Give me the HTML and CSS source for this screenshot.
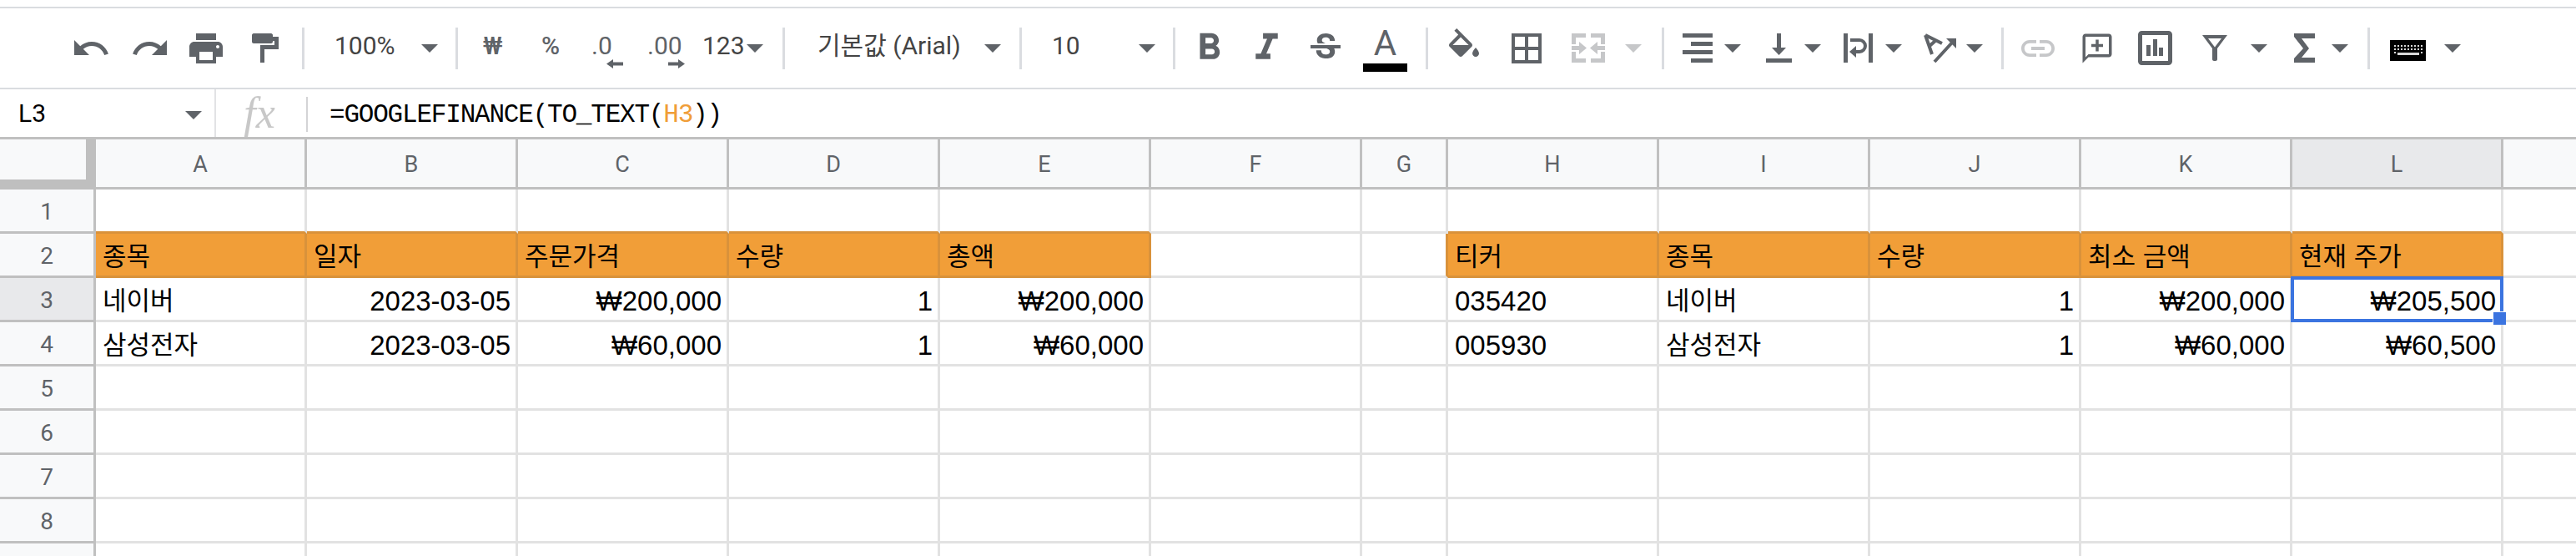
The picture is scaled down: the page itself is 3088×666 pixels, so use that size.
FILE: index.html
```html
<!DOCTYPE html>
<html lang="ko">
<head>
<meta charset="utf-8">
<title>Sheet</title>
<link rel="stylesheet" href="styles.css">
</head>
<body>
<div class="toolbar">
  <svg class="ic" viewBox="0 0 24 24"><path d="M12.5 8c-2.65 0-5.05.99-6.9 2.6L2 7v9h9l-3.62-3.62c1.39-1.16 3.16-1.88 5.12-1.88 3.54 0 6.55 2.31 7.6 5.5l2.37-.78C21.08 11.03 17.15 8 12.5 8z"/></svg>
  <svg class="ic" viewBox="0 0 24 24"><path d="M18.4 10.6C16.55 8.99 14.15 8 11.5 8c-4.65 0-8.58 3.03-9.96 7.22L3.9 16c1.05-3.19 4.05-5.5 7.6-5.5 1.95 0 3.73.72 5.12 1.88L13 16h9V7l-3.6 3.6z"/></svg>
  <svg class="ic" viewBox="0 0 24 24"><path d="M19 8H5c-1.66 0-3 1.34-3 3v6h4v4h12v-4h4v-6c0-1.66-1.34-3-3-3zm-3 11H8v-5h8v5zm3-7c-.55 0-1-.45-1-1s.45-1 1-1 1 .45 1 1-.45 1-1 1zm-1-9H6v4h12V3z"/></svg>
  <svg class="paint" viewBox="0 0 33 35"><path d="M2 0h21c1 0 2 1 2 2v2h7v15H15v16h-5V14h17V9h-2v1c0 1-1 2-2 2H2c-1 0-2-1-2-2V2c0-1 1-2 2-2z"/></svg>
  <i class="sep"></i>
  <span class="t">100%</span>
  <i class="dd"></i>
  <i class="sep"></i>
  <span class="t g b">₩</span>
  <span class="t g b">%</span>
  <span class="t g dec">.0<svg class="da" viewBox="0 0 20 11"><path d="M20 3.5H8V0L0 5.5 8 11V7.5h12z"/></svg></span>
  <span class="t g dec">.00<svg class="da da2" viewBox="0 0 20 11"><path d="M0 3.5h12V0l8 5.5-8 5.5V7.5H0z"/></svg></span>
  <span class="t">123</span>
  <i class="dd"></i>
  <i class="sep"></i>
  <span class="t">기본값 (Arial)</span>
  <i class="dd"></i>
  <i class="sep"></i>
  <span class="t">10</span>
  <i class="dd"></i>
  <i class="sep"></i>
  <svg class="ic lg" viewBox="0 0 24 24"><path d="M15.6 10.79c.97-.67 1.65-1.77 1.65-2.79 0-2.26-1.75-4-4-4H7v14h7.04c2.09 0 3.71-1.7 3.71-3.79 0-1.52-.86-2.82-2.15-3.42zM10 6.5h3c.83 0 1.5.67 1.5 1.5s-.67 1.5-1.5 1.5h-3v-3zm3.5 9H10v-3h3.5c.83 0 1.5.67 1.5 1.5s-.67 1.5-1.5 1.5z"/></svg>
  <svg class="ic lg" viewBox="0 0 24 24"><path d="M10 4v3h2.21l-3.42 8H6v3h8v-3h-2.21l3.42-8H18V4z"/></svg>
  <svg class="ic" viewBox="0 0 24 24"><path d="M7.24 8.75c-.26-.48-.39-1.03-.39-1.67 0-.61.13-1.16.4-1.67.26-.5.63-.93 1.11-1.29.48-.35 1.05-.63 1.7-.83.66-.19 1.39-.29 2.18-.29.81 0 1.54.11 2.21.34.66.22 1.23.54 1.69.94.47.4.83.88 1.08 1.43.25.55.38 1.15.38 1.81h-3.01c0-.31-.05-.59-.15-.85-.09-.27-.24-.49-.44-.68-.2-.19-.45-.33-.75-.44-.3-.1-.66-.16-1.06-.16-.39 0-.74.04-1.03.13-.29.09-.53.21-.72.36-.19.16-.34.34-.44.55-.1.21-.15.43-.15.66 0 .48.25.88.74 1.21.38.25.77.48 1.41.7H7.39c-.05-.08-.11-.17-.15-.25zM21 12v-2H3v2h9.62c.18.07.4.14.55.2.37.17.66.34.87.51.21.17.35.36.43.57.07.2.11.43.11.69 0 .23-.05.45-.14.66-.09.2-.23.38-.42.53-.19.15-.42.26-.71.35-.29.08-.63.13-1.01.13-.43 0-.83-.04-1.18-.13s-.66-.23-.91-.42c-.25-.19-.45-.44-.59-.75-.14-.31-.25-.76-.25-1.21H6.4c0 .55.08 1.13.24 1.58.16.45.37.85.65 1.21.28.35.6.66.98.92.37.26.78.48 1.22.65.44.17.9.3 1.38.39.48.08.96.13 1.44.13.8 0 1.53-.09 2.18-.28s1.21-.45 1.67-.79c.46-.34.82-.77 1.07-1.27s.38-1.07.38-1.71c0-.6-.1-1.14-.31-1.61-.05-.11-.11-.23-.17-.33H21z"/></svg>
  <span class="tc"><span class="tc-a">A</span><i class="tc-bar"></i></span>
  <i class="sep"></i>
  <svg class="ic" viewBox="0 0 24 24"><path d="M16.56 8.94L7.62 0 6.21 1.41l2.38 2.38-5.15 5.15c-.59.59-.59 1.54 0 2.12l5.5 5.5c.29.29.68.44 1.06.44s.77-.15 1.06-.44l5.5-5.5c.59-.58.59-1.53 0-2.12zM5.21 10L10 5.21 14.79 10H5.21zM19 11.5s-2 2.17-2 3.5c0 1.1.9 2 2 2s2-.9 2-2c0-1.33-2-3.5-2-3.5z"/></svg>
  <svg class="ic" viewBox="0 0 24 24"><path d="M3 3v18h18V3H3zm8 16H5v-6h6v6zm0-8H5V5h6v6zm8 8h-6v-6h6v6zm0-8h-6V5h6v6z"/></svg>
  <svg class="merge" viewBox="0 0 40 35"><path d="M0 0h17v5H5v8H0zM23 0h17v13h-5V5H23zM0 22h5v8h12v5H0zM35 22h5v13H23v-5h12zM0 15h9v-5l9 7.5-9 7.5v-5H0zM40 15h-9v-5l-9 7.5 9 7.5v-5h9z"/></svg>
  <i class="dd off"></i>
  <i class="sep"></i>
  <svg class="w36" viewBox="0 0 36 35"><path d="M0 0h36v5H0zM10 10h26v5H10zM0 20h36v5H0zM10 30h26v5H10z"/></svg>
  <i class="dd"></i>
  <svg class="w31" viewBox="0 0 31 35"><path d="M0 30h31v5H0zM13 0h5v17h6l-8.500 9-8.500-9h6z"/></svg>
  <i class="dd"></i>
  <svg class="w36" viewBox="0 0 36 35"><path d="M0 0h5v35H0zM30 0h5v35h-5z"/><path class="ln" d="M8 8h11a7 7 0 0 1 0 14h-6"/><path d="M15 15v14l-8-7z"/></svg>
  <i class="dd"></i>
  <svg class="rot" viewBox="0 0 40 37"><path class="ln" d="M2 3l20 10M2 3l8 23M6 17l9-8M13 35l22-24"/><path d="M39 7H27l12 12z"/></svg>
  <i class="dd"></i>
  <i class="sep"></i>
  <svg class="ic off" viewBox="0 0 24 24"><path d="M3.900 12c0-1.710 1.390-3.100 3.100-3.100h4V7H7c-2.760 0-5 2.240-5 5s2.240 5 5 5h4v-1.900H7c-1.710 0-3.100-1.390-3.100-3.100zM8 13h8v-2H8v2zm9-6h-4v1.900h4c1.710 0 3.100 1.390 3.100 3.100s-1.390 3.100-3.100 3.100h-4V17h4c2.760 0 5-2.240 5-5s-2.240-5-5-5z"/></svg>
  <svg class="ic sm" viewBox="0 0 24 24"><path d="M20 2H4c-1.100 0-2 .9-2 2v18l4-4h14c1.100 0 2-.9 2-2V4c0-1.100-.9-2-2-2zm0 14H6l-2 2V4h16v12z"/><path d="M13 6h-2v3H8v2h3v3h2v-3h3V9h-3z"/></svg>
  <svg class="chart" viewBox="0 0 41 41"><rect class="frame" x="2.500" y="2.500" width="36" height="36" rx="2"/><path d="M10 17h5v13h-5zM18 10h5v20h-5zM25 20h5v10h-5z"/></svg>
  <svg class="filt" viewBox="0 0 30 31"><path fill-rule="evenodd" d="M0 0h30L18 16v13c0 1-1 2-2 2h-2c-1 0-2-1-2-2V16zM7 4l8 10.500L23 4z"/></svg>
  <i class="dd"></i>
  <svg class="sig" viewBox="0 0 25 35"><path d="M0 0h25v6H9l9 12L9 29h16v6H0v-5l11-12L0 4z"/></svg>
  <i class="dd"></i>
  <i class="sep"></i>
  <svg class="kb" viewBox="0 0 43 25"><rect class="kb-bg" width="43" height="25"/><path class="kb-k" d="M5 6h2v2H5zM9 6h2v2H9zM13 6h2v2h-2zM17 6h2v2h-2zM21 6h2v2h-2zM25 6h2v2h-2zM29 6h2v2h-2zM33 6h2v2h-2zM37 6h2v2h-2zM5 10h2v2H5zM9 10h2v2H9zM13 10h2v2h-2zM17 10h2v2h-2zM21 10h2v2h-2zM25 10h2v2h-2zM29 10h2v2h-2zM33 10h2v2h-2zM37 10h2v2h-2zM5 14h2v2H5zM37 14h2v2h-2zM9 15h26v3H9z"/></svg>
  <i class="dd"></i>
</div>

<div class="formula">
  <div class="name"><span>L3</span><i class="dd"></i></div>
  <div class="fx">fx</div>
  <i class="fsep"></i>
  <div class="ftext">=GOOGLEFINANCE(TO_TEXT(<span class="ref">H3</span>))</div>
</div>

<div class="sheet">
  <div class="corner"></div>
  <div class="ch">A</div><div class="ch">B</div><div class="ch">C</div><div class="ch">D</div><div class="ch">E</div><div class="ch">F</div><div class="ch">G</div><div class="ch">H</div><div class="ch">I</div><div class="ch">J</div><div class="ch">K</div><div class="ch act">L</div><div class="ch x"></div>

  <div class="rh">1</div>
  <div class="c ob"></div><div class="c ob"></div><div class="c ob"></div><div class="c ob"></div><div class="c ob"></div><div class="c"></div><div class="c"></div><div class="c ob"></div><div class="c ob"></div><div class="c ob"></div><div class="c ob"></div><div class="c ob"></div><div class="c x"></div>

  <div class="rh">2</div>
  <div class="c o k">종목</div><div class="c o k">일자</div><div class="c o k">주문가격</div><div class="c o k">수량</div><div class="c o k">총액</div><div class="c"></div><div class="c or"></div><div class="c o k">티커</div><div class="c o k">종목</div><div class="c o k">수량</div><div class="c o k">최소 금액</div><div class="c o k">현재 주가</div><div class="c x"></div>

  <div class="rh act">3</div>
  <div class="c k">네이버</div><div class="c r">2023-03-05</div><div class="c r">₩200,000</div><div class="c r">1</div><div class="c r">₩200,000</div><div class="c"></div><div class="c"></div><div class="c">035420</div><div class="c k">네이버</div><div class="c r">1</div><div class="c r">₩200,000</div><div class="c r sel">₩205,500<i class="sel-box"></i><i class="sel-h"></i></div><div class="c x"></div>

  <div class="rh">4</div>
  <div class="c k">삼성전자</div><div class="c r">2023-03-05</div><div class="c r">₩60,000</div><div class="c r">1</div><div class="c r">₩60,000</div><div class="c"></div><div class="c"></div><div class="c">005930</div><div class="c k">삼성전자</div><div class="c r">1</div><div class="c r">₩60,000</div><div class="c r">₩60,500</div><div class="c x"></div>

  <div class="rh">5</div>
  <div class="c"></div><div class="c"></div><div class="c"></div><div class="c"></div><div class="c"></div><div class="c"></div><div class="c"></div><div class="c"></div><div class="c"></div><div class="c"></div><div class="c"></div><div class="c"></div><div class="c x"></div>

  <div class="rh">6</div>
  <div class="c"></div><div class="c"></div><div class="c"></div><div class="c"></div><div class="c"></div><div class="c"></div><div class="c"></div><div class="c"></div><div class="c"></div><div class="c"></div><div class="c"></div><div class="c"></div><div class="c x"></div>

  <div class="rh">7</div>
  <div class="c"></div><div class="c"></div><div class="c"></div><div class="c"></div><div class="c"></div><div class="c"></div><div class="c"></div><div class="c"></div><div class="c"></div><div class="c"></div><div class="c"></div><div class="c"></div><div class="c x"></div>

  <div class="rh">8</div>
  <div class="c"></div><div class="c"></div><div class="c"></div><div class="c"></div><div class="c"></div><div class="c"></div><div class="c"></div><div class="c"></div><div class="c"></div><div class="c"></div><div class="c"></div><div class="c"></div><div class="c x"></div>

  <div class="rh"></div>
  <div class="c"></div><div class="c"></div><div class="c"></div><div class="c"></div><div class="c"></div><div class="c"></div><div class="c"></div><div class="c"></div><div class="c"></div><div class="c"></div><div class="c"></div><div class="c"></div><div class="c x"></div>
</div>
</body>
</html>
```
FILE: styles.css
```css
* { box-sizing: border-box; }
html, body { margin: 0; height: 666px; overflow: hidden; background: #fff; }
body { font-family: "Liberation Sans", "Noto Sans CJK KR", sans-serif; color: #000; padding-top: 8px; }
i { display: block; font-style: normal; }
svg { display: block; fill: #5f6368; }

.toolbar {
  height: 99px;
  border-top: 2px solid #dadce0;
  border-bottom: 2px solid #dadce0;
  padding-left: 85px;
  display: grid;
  align-items: center;
  justify-items: start;
  grid-template-columns: 71px 67px 79px 60px 39px 104px 41px 33px 70px 60px 67px 66px 53px 43px 42px 200px 42px 39px 104px 41px 17px 69px 73px 69px 75px 22px 75px 78px 64px 44px 25px 50px 50px 46px 47px 50px 46px 51px 42px 20px 74px 70px 77px 58px 52px 45px 43px 27px 65px 1fr;
}
.sep { width: 3px; height: 50px; background: #dadce0; }
.ic { width: 48px; height: 48px; }
.ic.lg { width: 53px; height: 53px; }
.ic.sm { width: 42px; height: 42px; }
.off, .off path { fill: #c6c7c9; }
.dd { width: 0; height: 0; border-left: 10.5px solid transparent; border-right: 10.5px solid transparent; border-top: 10px solid #5f6368; }
.dd.off { border-top-color: #c6c7c9; }
.t { font-family: Roboto, "Noto Sans CJK KR", sans-serif; font-size: 30px; line-height: 34px; color: #444; white-space: nowrap; margin-top: -5px; }
.t.b { font-weight: 500; }
.t.g { color: #5f6368; }
.dec { position: relative; }
.da { position: absolute; left: 18px; top: 33px; width: 20px; height: 11px; }
.da2 { left: 25px; }
.paint { width: 33px; height: 35px; }
.tc { display: flex; flex-direction: column; align-items: center; width: 53px; align-self: start; margin-top: 26px; }
.tc-a { font-family: Roboto, sans-serif; font-size: 42px; line-height: 31px; color: #5f6368; }
.tc-bar { width: 53px; height: 10px; background: #000; margin-top: 9px; }
.merge { width: 40px; height: 35px; fill: #c6c7c9; }
.w36 { width: 36px; height: 35px; }
.w31 { width: 31px; height: 35px; }
.ln { fill: none; stroke: #5f6368; stroke-width: 4; }
.rot { width: 40px; height: 37px; }
.chart { width: 41px; height: 41px; }
.frame { fill: none; stroke: #5f6368; stroke-width: 5; }
.filt { width: 30px; height: 31px; }
.sig { width: 25px; height: 35px; }
.kb { width: 43px; height: 25px; margin-top: 6px; }
.kb-bg { fill: #000; }
.kb-k { fill: #d8d8d8; }

.formula { height: 60px; border-bottom: 3px solid #c0c0c0; display: flex; align-items: center; }
.name { width: 259px; height: 57px; border-right: 2px solid #e2e3e5; padding: 0 15px 0 22px; display: flex; align-items: center; justify-content: space-between; font-family: Roboto, sans-serif; font-size: 30px; }
.name .dd { margin-top: 5px; }
.fx { width: 108px; text-align: center; font-family: "Liberation Serif", serif; font-style: italic; font-size: 52px; line-height: 57px; color: #c8c8c8; padding-right: 4px; }
.fsep { width: 2px; height: 42px; background: #d4d4d6; margin-top: 2px; }
.ftext { margin-left: 26px; padding-top: 3px; font-family: "Liberation Mono", monospace; font-size: 31px; letter-spacing: -1.2px; white-space: nowrap; }
.ref { color: #f09d38; }

.sheet {
  display: grid;
  grid-template-columns: 115px repeat(6, 253px) 103px repeat(5, 253px) 1fr;
  grid-template-rows: 60px repeat(9, 53px);
}
.corner { background: #f8f9fa; border-right: 12px solid #bfbfbf; border-bottom: 12px solid #bfbfbf; }
.ch { background: #f8f9fa; border-right: 3px solid #c0c0c0; border-bottom: 3px solid #c0c0c0; display: flex; align-items: center; justify-content: center; padding-top: 2px; font-family: Roboto, sans-serif; font-size: 27px; color: #5f6368; }
.ch.x { border-right: 0; }
.ch.act, .rh.act { background: #e8e9eb; }
.rh { background: #f8f9fa; border-right: 3px solid #c0c0c0; border-bottom: 3px solid #c0c0c0; display: flex; align-items: center; justify-content: center; padding-top: 2px; font-family: Roboto, sans-serif; font-size: 28px; color: #5f6368; }
.c {
  border-right: 3px solid #e2e2e2;
  border-bottom: 3px solid #e2e2e2;
  padding: 0 6px 3px 8px;
  display: flex;
  align-items: flex-end;
  font-size: 33px;
  line-height: 38px;
  white-space: nowrap;
}
.c.x { border-right: 0; }
.c.r { justify-content: flex-end; }
.c.k { font-size: 31px; }
.c.o { background: #f19e38; border-color: #d9923b; }
.c.ob { border-bottom-color: #d9923b; }
.c.or { border-right-color: #d9923b; }
.sel { position: relative; }
.sel-box { position: absolute; left: -2px; top: -2px; right: -3px; bottom: -3px; border: 4.5px solid #3b74e0; }
.sel-h { position: absolute; right: -6px; bottom: -6px; width: 16px; height: 16px; background: #3b74e0; border-left: 1px solid #fff; border-top: 1px solid #fff; }
```
